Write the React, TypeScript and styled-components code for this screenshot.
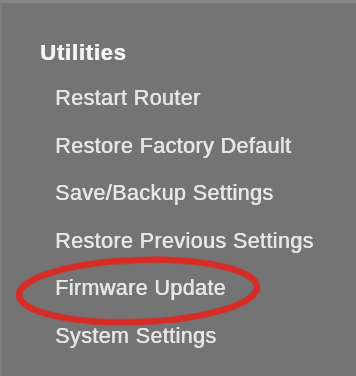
import React from "react";
import styled, { createGlobalStyle } from "styled-components";

const Global = createGlobalStyle`
  html, body { margin: 0; padding: 0; background: #747474; }
  body { font-family: "Liberation Sans", Arial, sans-serif; }
`;

const Panel = styled.div`
  position: relative;
  width: 356px;
  height: 376px;
  box-sizing: border-box;
  background: #747474;
  border-top: 3px solid #868686;
  border-left: 2px solid #7c7c7c;
  padding: 38px 0 0 38px;
  overflow: hidden;
`;

const Heading = styled.div`
  font-weight: bold;
  font-size: 22px;
  letter-spacing: 0.8px;
  color: #f4f4f4;
  line-height: 24px;
  text-shadow: 0.5px 0 0 #f4f4f4;
  filter: blur(0.6px);
`;

const List = styled.ul`
  list-style: none;
  margin: 10px 0 0 0;
  padding: 0 0 0 15px;
  display: flex;
  flex-direction: column;
`;

const Item = styled.li`
  font-size: 21.5px;
  letter-spacing: 0.4px;
  color: #e6e6e6;
  height: 47.6px;
  line-height: 47.6px;
  text-shadow: 0.6px 0 0 #e6e6e6;
  filter: blur(0.6px);
  white-space: nowrap;
`;

const Ring = styled.svg`
  position: absolute;
  left: 0;
  top: 0;
  pointer-events: none;
`;

const items = [
  "Restart Router",
  "Restore Factory Default",
  "Save/Backup Settings",
  "Restore Previous Settings",
  "Firmware Update",
  "System Settings",
];

export default function App() {
  return (
    <>
      <Global />
      <Panel>
        <Heading>Utilities</Heading>
        <List>
          {items.map((t) => (
            <Item key={t}>{t}</Item>
          ))}
        </List>
        <Ring width="356" height="376" viewBox="0 0 356 376">
          <ellipse
            cx="136"
            cy="288"
            rx="119"
            ry="31"
            fill="none"
            stroke="#d72c26"
            strokeWidth="6.5"
            transform="rotate(-2 136 288)"
            style={{ filter: "blur(0.7px)" }}
          />
        </Ring>
      </Panel>
    </>
  );
}
